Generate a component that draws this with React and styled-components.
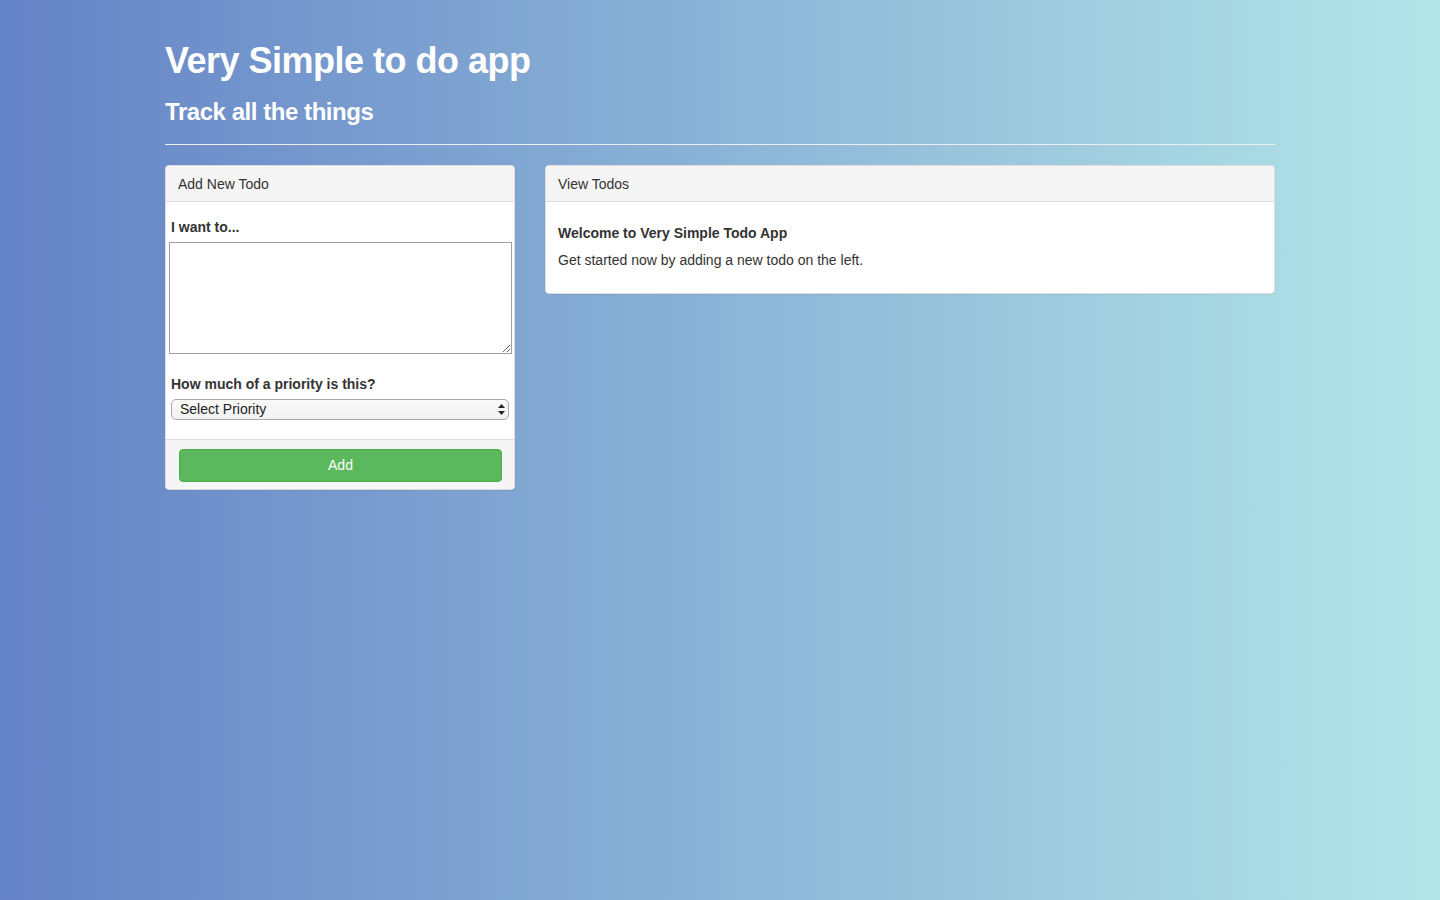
import React from "react";
import styled, { createGlobalStyle } from "styled-components";

const Global = createGlobalStyle`
  html, body { margin: 0; padding: 0; }
  body {
    min-height: 100vh;
    font-family: "Liberation Sans", Arial, sans-serif;
    font-size: 14px;
    line-height: 1.42857;
    color: #333;
    background: linear-gradient(to right, #6482c6, #b3e6e8);
  }
  * { box-sizing: border-box; }
`;

const Page = styled.div`
  min-height: 900px;
`;

const Container = styled.div`
  width: 1140px;
  margin: 0 auto;
  padding: 0 15px;
`;

const Header = styled.header`
  padding-top: 39px;
  border-bottom: 1px solid #eee;
  padding-bottom: 17px;
  margin-bottom: 20px;
`;

const Title = styled.h1`
  margin: 0;
  font-size: 36px;
  line-height: 44px;
  font-weight: 700;
  color: #fff;
  letter-spacing: -0.5px;
`;

const Subtitle = styled.h3`
  margin: 14px 0 0;
  font-size: 24px;
  line-height: 30px;
  font-weight: 700;
  color: #fff;
  letter-spacing: -0.45px;
`;

const Row = styled.div`
  display: grid;
  grid-template-columns: 350px 730px;
  gap: 30px;
  align-items: start;
`;

const Panel = styled.section`
  background: #fff;
  border: 1px solid #ddd;
  border-radius: 4px;
  box-shadow: 0 1px 1px rgba(0, 0, 0, 0.05);
  overflow: hidden;
`;

const PanelHeading = styled.div`
  background: #f5f5f5;
  border-bottom: 1px solid #ddd;
  padding: 8px 12px 7px;
  font-size: 14px;
  line-height: 20px;
  color: #333;
`;

const FormBody = styled.div`
  padding: 15px 2px 19px 3px;
`;

const Label = styled.label`
  display: block;
  font-weight: 700;
  font-size: 14px;
  line-height: 20px;
  padding-left: 2px;
  margin-bottom: 5px;
`;

const TextArea = styled.textarea`
  display: block;
  width: 100%;
  height: 112px;
  border: 1px solid #a0a0a0;
  margin: 0 0 20px;
  font-family: inherit;
  font-size: 14px;
  resize: both;
`;

const SelectWrap = styled.div`
  position: relative;
  margin: 0 3px 0 2px;
`;

const Select = styled.select`
  appearance: none;
  -webkit-appearance: none;
  display: block;
  width: 100%;
  height: 21px;
  padding: 0 8px 1px;
  line-height: 18px;
  font-family: "Liberation Sans", Arial, sans-serif;
  font-size: 14px;
  color: #222;
  background: linear-gradient(#fafafa, #f1f1f1);
  border: 1px solid #a9a9a9;
  border-radius: 5px;
`;

const Arrows = styled.svg`
  position: absolute;
  right: 4px;
  top: 5px;
  pointer-events: none;
`;

const PanelFooter = styled.div`
  background: #f5f5f5;
  border-top: 1px solid #ddd;
  padding: 9px 12px 7px 13px;
`;

const AddButton = styled.button`
  display: block;
  width: 100%;
  height: 33px;
  padding: 0 12px 1px;
  background: #5cb85c;
  border: 1px solid #4cae4c;
  border-radius: 4px;
  color: #fff;
  font-family: "Liberation Sans", Arial, sans-serif;
  font-size: 14px;
  cursor: pointer;
`;

const ViewBody = styled.div`
  padding: 21px 12px 23px;
`;

const WelcomeTitle = styled.h4`
  margin: 0 0 7px;
  font-size: 14px;
  line-height: 20px;
  font-weight: 700;
`;

const Text = styled.p`
  margin: 0;
  font-size: 14px;
  line-height: 20px;
`;

export default function App() {
  return (
    <Page>
      <Global />
      <Container>
        <Header>
          <Title>Very Simple to do app</Title>
          <Subtitle>Track all the things</Subtitle>
        </Header>
        <Row>
          <Panel>
            <PanelHeading>Add New Todo</PanelHeading>
            <FormBody>
              <Label htmlFor="todo">I want to...</Label>
              <TextArea id="todo" />
              <Label htmlFor="priority">How much of a priority is this?</Label>
              <SelectWrap>
                <Select id="priority" defaultValue="">
                  <option value="">Select Priority</option>
                  <option value="1">Low</option>
                  <option value="2">Medium</option>
                  <option value="3">High</option>
                </Select>
                <Arrows width="7" height="11" viewBox="0 0 7 11">
                  <path d="M3.5 0 L7 4 L0 4 Z M0 7 L7 7 L3.5 11 Z" fill="#222" />
                </Arrows>
              </SelectWrap>
            </FormBody>
            <PanelFooter>
              <AddButton type="button">Add</AddButton>
            </PanelFooter>
          </Panel>
          <Panel>
            <PanelHeading>View Todos</PanelHeading>
            <ViewBody>
              <WelcomeTitle>Welcome to Very Simple Todo App</WelcomeTitle>
              <Text>Get started now by adding a new todo on the left.</Text>
            </ViewBody>
          </Panel>
        </Row>
      </Container>
    </Page>
  );
}
